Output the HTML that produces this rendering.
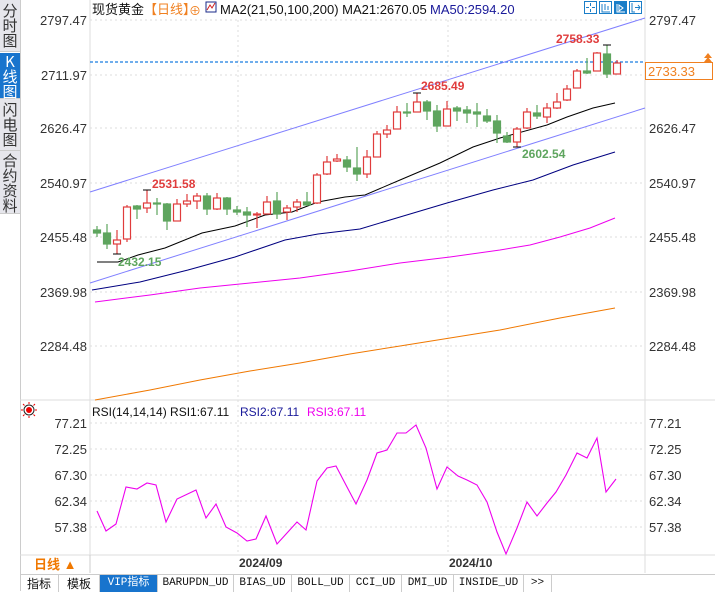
<!DOCTYPE html>
<html><head><meta charset="utf-8"><style>
body{margin:0;width:715px;height:591px;overflow:hidden;background:#fff;font-family:"Liberation Sans","Noto Sans CJK SC",sans-serif;position:relative}
.sb{position:absolute;left:0;top:0;width:20px;height:591px;background:#fff;border-right:1px solid #ccc}
.sb div{position:absolute;left:0;width:20px;background:#e6e6ec;color:#333;font-size:15px;line-height:15px;text-align:center;border-bottom:1px solid #ccc;font-family:"Noto Sans CJK SC",sans-serif}
.tabs{position:absolute;left:20px;top:574px;height:17px;width:695px;border-top:1px solid #ccc}
.tabs span{position:absolute;top:0;height:17px;line-height:17px;font-size:11px;text-align:center;border-right:1px solid #ccc;color:#111;font-family:"Liberation Mono","Noto Sans CJK SC",monospace}
</style></head><body>
<div class="sb">
<div style="top:0;height:48px;padding-top:3px">分<br>时<br>图</div>
<div style="top:53px;height:44px;background:#1874cd;color:#fff;padding-top:1px">K<br>线<br>图</div>
<div style="top:99px;height:48px;padding-top:3px">闪<br>电<br>图</div>
<div style="top:151px;height:60px;padding-top:2px">合<br>约<br>资<br>料</div>
</div>
<svg width="715" height="591" style="position:absolute;left:0;top:0" font-family="Liberation Sans, Noto Sans CJK SC, sans-serif">
<g stroke="#ddd" stroke-dasharray="2,3">
<line x1="90" y1="20" x2="645" y2="20"/><line x1="90" y1="75" x2="645" y2="75"/><line x1="90" y1="128" x2="645" y2="128"/><line x1="90" y1="183" x2="645" y2="183"/><line x1="90" y1="237" x2="645" y2="237"/><line x1="90" y1="292" x2="645" y2="292"/><line x1="90" y1="346" x2="645" y2="346"/>
<line x1="90" y1="423" x2="645" y2="423"/><line x1="90" y1="449" x2="645" y2="449"/><line x1="90" y1="475" x2="645" y2="475"/><line x1="90" y1="501" x2="645" y2="501"/><line x1="90" y1="527" x2="645" y2="527"/>
<line x1="238" y1="20" x2="238" y2="555"/><line x1="448" y1="20" x2="448" y2="555"/>
</g>
<line x1="90" y1="0" x2="90" y2="573" stroke="#ddd"/>
<line x1="645" y1="0" x2="645" y2="573" stroke="#ddd"/>
<line x1="20" y1="400" x2="715" y2="400" stroke="#ddd"/>
<line x1="20" y1="555" x2="715" y2="555" stroke="#ddd"/>
<line x1="90" y1="555" x2="90" y2="573" stroke="#ccc"/>
<g font-size="13" fill="#333" text-anchor="end">
<text x="87" y="25">2797.47</text><text x="87" y="80">2711.97</text><text x="87" y="133">2626.47</text><text x="87" y="188">2540.97</text><text x="87" y="242">2455.48</text><text x="87" y="297">2369.98</text><text x="87" y="351">2284.48</text>
<text x="87" y="428">77.21</text><text x="87" y="454">72.25</text><text x="87" y="480">67.30</text><text x="87" y="506">62.34</text><text x="87" y="532">57.38</text>
</g>
<g font-size="13" fill="#333">
<text x="649" y="25">2797.47</text><text x="649" y="133">2626.47</text><text x="649" y="188">2540.97</text><text x="649" y="242">2455.48</text><text x="649" y="297">2369.98</text><text x="649" y="351">2284.48</text>
<text x="649" y="428">77.21</text><text x="649" y="454">72.25</text><text x="649" y="480">67.30</text><text x="649" y="506">62.34</text><text x="649" y="532">57.38</text>
</g>
<rect x="645.5" y="62.5" width="67" height="17" fill="#fff" stroke="#f08020"/>
<text x="648" y="76" font-size="13" fill="#f08020">2733.33</text>
<path d="M704 58 L708 53 L712 58 Z M704 62 L708 57 L712 62Z" fill="#f08020"/>
<line x1="90" y1="62" x2="645" y2="62" stroke="#1a7ee0" stroke-dasharray="3,2" stroke-width="1.2"/>
<text x="92" y="14" font-size="13" fill="#111">现货黄金</text>
<text x="144" y="14" font-size="13" fill="#f08020">【日线】</text>
<text x="189" y="15" font-size="12" fill="#f08020">⊕</text>
<rect x="206" y="2" width="10" height="10" fill="#fff" stroke="#1a2a8a"/><path d="M207 10 L210 5 L212 8 L215 3" stroke="#d02020" fill="none"/>
<text x="220" y="14" font-size="13" fill="#111">MA2(21,50,100,200) MA21:2670.05</text>
<text x="430" y="14" font-size="13" fill="#1a1a9a">MA50:2594.20</text>
<g fill="none" stroke="#1a7ec8">
<rect x="584.5" y="1.5" width="12" height="12"/><rect x="599.5" y="1.5" width="12" height="12"/><rect x="614.5" y="1.5" width="12" height="12" fill="#1a7ec8"/><rect x="629.5" y="1.5" width="12" height="12"/>
<path d="M590.5 3v3M590.5 9v3M586 7.5h3M592 7.5h3M602 4v8h8M605 4v6M608 6v4"/><path d="M617 4v8h8M619 5l4 3-4 3z" stroke="#fff"/><path d="M632 3v9h3M635 7.5h5M638 5l2 2.5-2 2.5"/>
</g>
<line x1="90" y1="192" x2="645" y2="18" stroke="#8080ff"/>
<line x1="90" y1="283" x2="645" y2="108" stroke="#8080ff"/>
<polyline fill="none" stroke="#f07800" points="95,400 150,390 200,380 250,371 300,363 350,354 400,346 450,338 500,330 560,318 615,308"/>
<polyline fill="none" stroke="#ee00ee" points="95,302 150,295 200,288 250,283 300,278 350,271 400,263 450,257 500,250 530,245 560,237 590,228 615,218"/>
<polyline fill="none" stroke="#000080" points="92,290 140,282 188,270 235,257 285,240 318,234 360,229 400,217 447,203 493,190 533,180 573,165 615,152"/>
<polyline fill="none" stroke="#000" points="97,262 118,262 138,255 165,248 202,233 235,226 265,215 292,212 318,202 345,197 365,195 400,180 440,163 473,147 500,138 547,125 567,117 593,108 615,103"/>
<g stroke-width="1.2">
<g stroke="#5ea55e" fill="#5ea55e">
<line x1="97" y1="226" x2="97" y2="237"/><rect x="93.5" y="230" width="7" height="3"/>
<line x1="107" y1="224" x2="107" y2="249"/><rect x="103.5" y="233" width="7" height="11"/>
<line x1="137" y1="205" x2="137" y2="219"/><rect x="133.5" y="206" width="7" height="3"/>
<line x1="157" y1="198" x2="157" y2="215"/><rect x="153.5" y="203" width="7" height="1"/>
<line x1="167" y1="203" x2="167" y2="230"/><rect x="163.5" y="204" width="7" height="17"/>
<line x1="207" y1="193" x2="207" y2="215"/><rect x="203.5" y="196" width="7" height="13"/>
<line x1="227" y1="197" x2="227" y2="215"/><rect x="223.5" y="198" width="7" height="11"/>
<line x1="237" y1="206" x2="237" y2="215"/><rect x="233.5" y="210" width="7" height="2"/>
<line x1="247" y1="207" x2="247" y2="227"/><rect x="243.5" y="212" width="7" height="3"/>
<line x1="277" y1="192" x2="277" y2="219"/><rect x="273.5" y="201" width="7" height="13"/>
<line x1="307" y1="192" x2="307" y2="206"/><rect x="303.5" y="202" width="7" height="3"/>
<line x1="347" y1="156" x2="347" y2="172"/><rect x="343.5" y="160" width="7" height="7"/>
<line x1="357" y1="147" x2="357" y2="181"/><rect x="353.5" y="168" width="7" height="6"/>
<line x1="407" y1="103" x2="407" y2="117"/><rect x="403.5" y="112" width="7" height="1"/>
<line x1="427" y1="100" x2="427" y2="120"/><rect x="423.5" y="102" width="7" height="9"/>
<line x1="437" y1="105" x2="437" y2="132"/><rect x="433.5" y="111" width="7" height="15"/>
<line x1="457" y1="106" x2="457" y2="121"/><rect x="453.5" y="108" width="7" height="3"/>
<line x1="467" y1="106" x2="467" y2="123"/><rect x="463.5" y="110" width="7" height="3"/>
<line x1="477" y1="103" x2="477" y2="127"/><rect x="473.5" y="112" width="7" height="2"/>
<line x1="487" y1="109" x2="487" y2="123"/><rect x="483.5" y="116" width="7" height="5"/>
<line x1="497" y1="115" x2="497" y2="143"/><rect x="493.5" y="121" width="7" height="12"/>
<line x1="507" y1="132" x2="507" y2="143"/><rect x="503.5" y="136" width="7" height="6"/>
<line x1="537" y1="105" x2="537" y2="119"/><rect x="533.5" y="113" width="7" height="3"/>
<line x1="587" y1="58" x2="587" y2="74"/><rect x="583.5" y="71" width="7" height="2"/>
<line x1="607" y1="45" x2="607" y2="78"/><rect x="603.5" y="54" width="7" height="20"/>
</g>
<g stroke="#e03c3c" fill="#fff">
<line x1="117" y1="230" x2="117" y2="254"/><rect x="113.5" y="240" width="7" height="4"/>
<line x1="127" y1="205" x2="127" y2="242"/><rect x="123.5" y="207" width="7" height="32"/>
<line x1="147" y1="190" x2="147" y2="213"/><rect x="143.5" y="203" width="7" height="5"/>
<line x1="177" y1="199" x2="177" y2="221"/><rect x="173.5" y="204" width="7" height="17"/>
<line x1="187" y1="194" x2="187" y2="207"/><rect x="183.5" y="201" width="7" height="3"/>
<line x1="197" y1="193" x2="197" y2="209"/><rect x="193.5" y="196" width="7" height="5"/>
<line x1="217" y1="193" x2="217" y2="210"/><rect x="213.5" y="198" width="7" height="11"/>
<line x1="257" y1="212" x2="257" y2="228"/><rect x="253.5" y="214" width="7" height="1"/>
<line x1="267" y1="196" x2="267" y2="214"/><rect x="263.5" y="202" width="7" height="12"/>
<line x1="287" y1="205" x2="287" y2="220"/><rect x="283.5" y="208" width="7" height="4"/>
<line x1="297" y1="199" x2="297" y2="212"/><rect x="293.5" y="202" width="7" height="5"/>
<line x1="317" y1="173" x2="317" y2="204"/><rect x="313.5" y="175" width="7" height="28"/>
<line x1="327" y1="156" x2="327" y2="175"/><rect x="323.5" y="162" width="7" height="12"/>
<line x1="337" y1="154" x2="337" y2="162"/><rect x="333.5" y="159" width="7" height="2"/>
<line x1="367" y1="150" x2="367" y2="178"/><rect x="363.5" y="157" width="7" height="17"/>
<line x1="377" y1="131" x2="377" y2="157"/><rect x="373.5" y="134" width="7" height="23"/>
<line x1="387" y1="125" x2="387" y2="138"/><rect x="383.5" y="130" width="7" height="4"/>
<line x1="397" y1="106" x2="397" y2="129"/><rect x="393.5" y="112" width="7" height="17"/>
<line x1="417" y1="93" x2="417" y2="112"/><rect x="413.5" y="102" width="7" height="10"/>
<line x1="447" y1="101" x2="447" y2="126"/><rect x="443.5" y="109" width="7" height="17"/>
<line x1="517" y1="127" x2="517" y2="147"/><rect x="513.5" y="129" width="7" height="13"/>
<line x1="527" y1="108" x2="527" y2="129"/><rect x="523.5" y="112" width="7" height="16"/>
<line x1="547" y1="103" x2="547" y2="123"/><rect x="543.5" y="108" width="7" height="9"/>
<line x1="557" y1="93" x2="557" y2="109"/><rect x="553.5" y="102" width="7" height="6"/>
<line x1="567" y1="85" x2="567" y2="101"/><rect x="563.5" y="89" width="7" height="11"/>
<line x1="577" y1="69" x2="577" y2="88"/><rect x="573.5" y="71" width="7" height="17"/>
<line x1="597" y1="52" x2="597" y2="71"/><rect x="593.5" y="53" width="7" height="18"/>
<line x1="617" y1="60" x2="617" y2="74"/><rect x="613.5" y="63" width="7" height="11"/>
</g>
</g>
<g stroke="#000">
<path d="M143 190h8M113 254h8M413 93h8M513 147h8M603 45h8"/>
</g>
<g font-size="12" font-weight="bold">
<text x="152" y="188" fill="#e03c3c">2531.58</text>
<text x="118" y="266" fill="#5ea55e">2432.15</text>
<text x="421" y="90" fill="#e03c3c">2685.49</text>
<text x="522" y="158" fill="#5ea55e">2602.54</text>
<text x="556" y="43" fill="#e03c3c">2758.33</text>
</g>
<circle cx="29" cy="410" r="3" fill="#e00"/><circle cx="29" cy="410" r="5" fill="none" stroke="#222"/>
<path d="M29 402v2M29 416v2M21 410h2M35 410h2M23 404l1.5 1.5M35 404l-1.5 1.5M23 416l1.5-1.5M35 416l-1.5-1.5" stroke="#e00"/>
<text x="92" y="416" font-size="12" fill="#111">RSI(14,14,14) RSI1:67.11</text>
<text x="240" y="416" font-size="12" fill="#1a1a9a">RSI2:67.11</text>
<text x="307" y="416" font-size="12" fill="#ee00ee">RSI3:67.11</text>
<polyline fill="none" stroke="#ee00ee" stroke-width="1.1" points="97,511 106,531 116,524 126,487 137,489 147,483 156,485 166,522 177,499 196,490 206,518 216,504 226,527 237,533 247,541 256,539 266,516 277,544 287,533 297,522 306,530 317,481 327,468 336,466 347,487 356,504 367,480 377,453 387,450 397,433 406,433 416,425 426,448 437,489 447,467 458,476 467,480 477,485 487,502 497,532 506,554 517,528 527,502 537,516 547,503 556,492 566,475 577,453 587,458 597,438 606,492 616,479"/>
<g font-size="12" font-weight="bold" fill="#333">
<text x="239" y="567">2024/09</text><text x="449" y="567">2024/10</text>
</g>
<text x="34" y="569" font-size="13" font-weight="bold" fill="#f07800">日线 ▲</text>
</svg>
<div class="tabs">
<span style="left:0;width:38px;font-family:'Noto Sans CJK SC',sans-serif;font-size:12px">指标</span>
<span style="left:39px;width:40px;font-family:'Noto Sans CJK SC',sans-serif;font-size:12px">模板</span>
<span style="left:80px;width:57px;background:#1874cd;color:#fff">VIP指标</span>
<span style="left:138px;width:75px">BARUPDN_UD</span>
<span style="left:214px;width:57px">BIAS_UD</span>
<span style="left:272px;width:57px">BOLL_UD</span>
<span style="left:330px;width:51px">CCI_UD</span>
<span style="left:382px;width:51px">DMI_UD</span>
<span style="left:434px;width:69px">INSIDE_UD</span>
<span style="left:504px;width:27px">&gt;&gt;</span>
</div>
</body></html>
